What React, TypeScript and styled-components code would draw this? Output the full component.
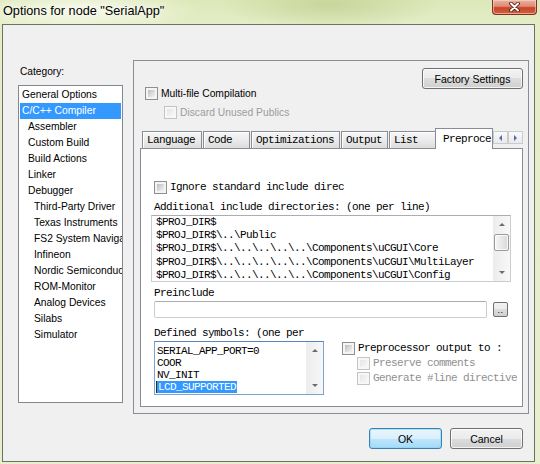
import React from 'react';
import styled, { createGlobalStyle } from 'styled-components';

const UI = `"Liberation Sans", Arial, sans-serif`;
const MONO = `"Liberation Mono", "DejaVu Sans Mono", monospace`;

const GlobalStyle = createGlobalStyle`
  html, body { margin: 0; padding: 0; }
  body { width: 540px; height: 464px; overflow: hidden; background: #e4edc8; }
  * { box-sizing: border-box; }
`;

/* ---------- window frame ---------- */

const Window = styled.div`
  width: 540px;
  height: 464px;
  display: flex;
  flex-direction: column;
  font-family: ${UI};
  background:
    radial-gradient(ellipse 120px 22px at 80px 10px, rgba(250, 252, 240, 0.9), rgba(250, 252, 240, 0) 100%),
    radial-gradient(ellipse 110px 26px at 330px 4px, rgba(196, 210, 150, 0.85), rgba(196, 210, 150, 0) 100%),
    linear-gradient(180deg, #dde8b9 0px, #e4edc6 24px, #e7efcf 100%);
`;

const TitleBar = styled.div`
  height: 24px;
  flex: none;
  display: flex;
  justify-content: space-between;
  align-items: flex-start;
`;

const TitleText = styled.div`
  margin: 3px 0 0 3px;
  font-size: 12.7px;
  line-height: 16px;
  color: #000;
  text-shadow: 0 0 6px rgba(255, 255, 255, 0.95), 0 0 10px rgba(255, 255, 255, 0.8);
`;

const CloseButton = styled.div`
  width: 45px;
  height: 15px;
  margin-right: 3px;
  display: flex;
  align-items: center;
  justify-content: center;
  border: 1px solid #7c3424;
  border-top: none;
  border-radius: 0 0 4px 4px;
  background: linear-gradient(180deg, #eab3a4 0%, #df8a72 45%, #c7452b 55%, #d3603f 100%);
  box-shadow: inset 0 0 0 1px rgba(255, 220, 205, 0.55);
`;

const Client = styled.div`
  flex: 1;
  margin: 0 5px 2px 2px;
  border: 1px solid #6c7261;
  background: #f0f0f0;
  display: flex;
  flex-direction: column;
`;

const MainRow = styled.div`
  display: flex;
  align-items: flex-start;
  margin-top: 35px;
  padding-left: 15px;
`;

/* ---------- category list ---------- */

const LeftColumn = styled.div`
  width: 105px;
  display: flex;
  flex-direction: column;
  padding-top: 5px;
`;

const CategoryLabel = styled.div`
  height: 14px;
  margin: 0 0 6px 2px;
  font-size: 10.2px;
  line-height: 14px;
  color: #000;
`;

const CategoryList = styled.div`
  height: 318px;
  border: 1px solid #828790;
  background: #fff;
  padding-top: 1px;
  overflow: hidden;
`;

const CategoryItem = styled.div<{ $level: number; $selected?: boolean }>`
  height: 16px;
  line-height: 16px;
  font-size: 10.3px;
  white-space: nowrap;
  overflow: hidden;
  padding-left: ${p => (p.$selected ? 2 : [3, 9, 15][p.$level])}px;
  margin: 0 ${p => (p.$selected ? '1px' : '0')};
  color: ${p => (p.$selected ? '#fff' : '#000')};
  background: ${p => (p.$selected ? '#3399ff' : 'transparent')};
`;

/* ---------- options group ---------- */

const OptionsGroup = styled.div`
  margin-left: 10px;
  width: 396px;
  height: 354px;
  border: 1px solid #8a8d93;
  display: flex;
  flex-direction: column;
`;

const FactoryRow = styled.div`
  display: flex;
  justify-content: flex-end;
  padding-right: 5px;
  margin-top: 7px;
`;

const PushButton = styled.div<{ $width: number; $default?: boolean }>`
  width: ${p => p.$width}px;
  height: 21px;
  flex: none;
  display: flex;
  align-items: center;
  justify-content: center;
  font-family: ${UI};
  font-size: 10.5px;
  color: #000;
  border-radius: 3px;
  border: 1px solid ${p => (p.$default ? '#3c7fb1' : '#707070')};
  background: ${p =>
    p.$default
      ? 'linear-gradient(180deg, #eaf6fd 0%, #d9f0fc 50%, #bee6fd 50%, #a7d9f5 100%)'
      : 'linear-gradient(180deg, #f2f2f2 0%, #ebebeb 50%, #dddddd 50%, #cfcfcf 100%)'};
  box-shadow: inset 0 0 0 1px ${p => (p.$default ? 'rgba(120, 220, 250, 0.6)' : 'rgba(255, 255, 255, 0.75)')};
`;

const CheckRow = styled.div<{ $indent: number; $top: number; $clip?: number }>`
  display: flex;
  align-items: center;
  height: 13px;
  margin-top: ${p => p.$top}px;
  margin-left: ${p => p.$indent}px;
  ${p => (p.$clip ? `width: ${p.$clip}px; overflow: hidden;` : '')}
`;

const CheckBox = styled.span<{ $disabled?: boolean }>`
  position: relative;
  width: 13px;
  height: 13px;
  flex: none;
  margin-right: 3px;
  border: 1px solid ${p => (p.$disabled ? '#c4c4c4' : '#8e8f8f')};
  background: ${p => (p.$disabled ? '#f7f7f7' : '#f4f4f4')};
  &::after {
    content: '';
    position: absolute;
    inset: 2px;
    background: ${p =>
      p.$disabled
        ? 'linear-gradient(135deg, #e6e6e6, #f7f7f7)'
        : 'linear-gradient(135deg, #b9bdc3, #e4e5e7 70%, #f0f0f1)'};
  }
`;

const UiLabel = styled.span<{ $muted?: boolean }>`
  font-size: 10.3px;
  line-height: 13px;
  white-space: nowrap;
  color: ${p => (p.$muted ? '#9c9c9c' : '#000')};
`;

const MonoText = styled.span<{ $muted?: boolean }>`
  font-family: ${MONO};
  font-size: 11px;
  letter-spacing: -0.6px;
  line-height: 13px;
  white-space: nowrap;
  color: ${p => (p.$muted ? '#8f8f8f' : '#000')};
`;

/* ---------- tabs ---------- */

const TabStrip = styled.div`
  position: relative;
  z-index: 1;
  display: flex;
  align-items: flex-end;
  height: 21px;
  margin: 9px 0 -1px 6px;
  width: 383px;
  padding-left: 2px;
`;

const Tab = styled.div<{ $width: number; $active?: boolean }>`
  width: ${p => p.$width}px;
  flex: none;
  height: ${p => (p.$active ? 21 : 18)}px;
  margin-right: ${p => (p.$active ? 0 : 1)}px;
  margin-left: ${p => (p.$active ? -2 : 0)}px;
  padding: ${p => (p.$active ? '2px 0 0 7px' : '0 0 0 4px')};
  border: 1px solid #898c95;
  border-bottom: ${p => (p.$active ? 'none' : '1px solid #898c95')};
  background: ${p =>
    p.$active ? '#fff' : 'linear-gradient(180deg, #f6f6f6 0%, #ebebeb 50%, #dcdcdc 100%)'};
  box-shadow: ${p => (p.$active ? 'none' : 'inset 1px 1px 0 #fff')};
  font-family: ${MONO};
  font-size: 11px;
  letter-spacing: -0.6px;
  line-height: 16px;
  white-space: nowrap;
  overflow: hidden;
  color: #000;
`;

const TabScroller = styled.div`
  align-self: flex-start;
  margin-top: 3px;
  display: flex;
`;

const ScrollerButton = styled.div`
  width: 15px;
  height: 13px;
  display: flex;
  align-items: center;
  justify-content: center;
  border: 1px solid #c9cbd0;
  background: linear-gradient(180deg, #fafafa, #e9e9e9);
`;

const ArrowGlyph = styled.span<{ $dir: 'left' | 'right' | 'up' | 'down'; $color: string; $size: number }>`
  width: 0;
  height: 0;
  border-style: solid;
  border-color: transparent;
  ${p => {
    const s = p.$size;
    switch (p.$dir) {
      case 'left':
        return `border-width: ${s}px ${s}px ${s}px 0; border-right-color: ${p.$color};`;
      case 'right':
        return `border-width: ${s}px 0 ${s}px ${s}px; border-left-color: ${p.$color};`;
      case 'up':
        return `border-width: 0 ${s}px ${s}px ${s}px; border-bottom-color: ${p.$color};`;
      default:
        return `border-width: ${s}px ${s}px 0 ${s}px; border-top-color: ${p.$color};`;
    }
  }}
`;

const TabPanel = styled.div`
  margin-left: 6px;
  width: 383px;
  height: 259px;
  border: 1px solid #898c95;
  background: #fff;
  display: flex;
  flex-direction: column;
`;

const FieldLabel = styled.div<{ $top: number }>`
  margin: ${p => p.$top}px 0 0 13px;
  height: 13px;
  display: flex;
  align-items: center;
`;

/* ---------- edit boxes ---------- */

const EditBox = styled.div<{ $width: number; $height: number; $focused?: boolean }>`
  width: ${p => p.$width}px;
  height: ${p => p.$height}px;
  flex: none;
  display: flex;
  background: #fff;
  border: 1px solid ${p => (p.$focused ? '#7da2ce' : '#c9ccd2')};
  border-top-color: ${p => (p.$focused ? '#5a86c0' : '#abadb3')};
`;

const Lines = styled.div<{ $pad: string; $lineHeight: number }>`
  flex: 1;
  overflow: hidden;
  padding: ${p => p.$pad};
  display: flex;
  flex-direction: column;
  & > * {
    height: ${p => p.$lineHeight}px;
    line-height: ${p => p.$lineHeight}px;
  }
`;

const SelectedLine = styled.span`
  align-self: flex-start;
  background: #3399ff;
  color: #fff;
  padding: 0 1px;
  border-left: 1px solid #3b2a10;
  margin-left: -1px;
`;

const Scrollbar = styled.div`
  width: 17px;
  flex: none;
  display: flex;
  flex-direction: column;
  background: linear-gradient(90deg, #ececec, #f8f8f8);
`;

const ScrollArrow = styled.div`
  height: 17px;
  flex: none;
  display: flex;
  align-items: center;
  justify-content: center;
`;

const ScrollThumb = styled.div`
  height: 17px;
  flex: none;
  margin: 1px 0 0 1px;
  width: 15px;
  border: 1px solid #9a9a9a;
  border-radius: 2px;
  background: linear-gradient(90deg, #f6f6f6, #e6e6e6 55%, #d9d9d9);
  box-shadow: inset 0 0 0 1px rgba(255, 255, 255, 0.8);
`;

const ScrollTrack = styled.div`
  flex: 1;
`;

const InputRow = styled.div<{ $indent?: number }>`
  display: flex;
  align-items: center;
  margin: 1px 0 0 ${p => p.$indent ?? 13}px;
`;

const BrowseButton = styled.div`
  width: 15px;
  height: 15px;
  margin-left: 6px;
  display: flex;
  align-items: flex-end;
  justify-content: center;
  padding-bottom: 2px;
  border: 1px solid #707070;
  border-radius: 2px;
  background: linear-gradient(180deg, #f2f2f2 0%, #ebebeb 50%, #dddddd 50%, #cfcfcf 100%);
  font-family: ${UI};
  font-size: 9px;
  line-height: 8px;
  letter-spacing: 0.5px;
  color: #000;
`;

const BottomRow = styled.div`
  display: flex;
  align-items: flex-start;
  margin: 1px 0 0 13px;
`;

const OutputColumn = styled.div`
  margin-left: 18px;
  display: flex;
  flex-direction: column;
`;

const DialogButtons = styled.div`
  display: flex;
  justify-content: flex-end;
  gap: 8px;
  margin-top: 14px;
  padding-right: 11px;
`;

/* ---------- data ---------- */

const categories: { label: string; level: number; selected?: boolean }[] = [
  { label: 'General Options', level: 0 },
  { label: 'C/C++ Compiler', level: 1, selected: true },
  { label: 'Assembler', level: 1 },
  { label: 'Custom Build', level: 1 },
  { label: 'Build Actions', level: 1 },
  { label: 'Linker', level: 1 },
  { label: 'Debugger', level: 1 },
  { label: 'Third-Party Driver', level: 2 },
  { label: 'Texas Instruments', level: 2 },
  { label: 'FS2 System Navigator', level: 2 },
  { label: 'Infineon', level: 2 },
  { label: 'Nordic Semiconductor', level: 2 },
  { label: 'ROM-Monitor', level: 2 },
  { label: 'Analog Devices', level: 2 },
  { label: 'Silabs', level: 2 },
  { label: 'Simulator', level: 2 },
];

const tabs = [
  { label: 'Language', width: 60 },
  { label: 'Code', width: 47 },
  { label: 'Optimizations', width: 89 },
  { label: 'Output', width: 47 },
  { label: 'List', width: 47 },
];

const includeDirs = [
  '$PROJ_DIR$',
  '$PROJ_DIR$\\..\\Public',
  '$PROJ_DIR$\\..\\..\\..\\..\\..\\Components\\uCGUI\\Core',
  '$PROJ_DIR$\\..\\..\\..\\..\\..\\Components\\uCGUI\\MultiLayer',
  '$PROJ_DIR$\\..\\..\\..\\..\\..\\Components\\uCGUI\\Config',
];

const symbols = ['SERIAL_APP_PORT=0', 'COOR', 'NV_INIT'];

function CloseGlyph() {
  return (
    <svg width="13" height="10" viewBox="0 0 13 10">
      <path d="M3 1.5 L10 8.5 M10 1.5 L3 8.5" stroke="#5a1d12" strokeWidth="3.8" strokeLinecap="round" />
      <path d="M3 1.5 L10 8.5 M10 1.5 L3 8.5" stroke="#ffffff" strokeWidth="2" strokeLinecap="round" />
    </svg>
  );
}

function VScroll({ thumb }: { thumb?: boolean }) {
  return (
    <Scrollbar>
      <ScrollArrow>
        <ArrowGlyph $dir="up" $color="#6b6b6b" $size={3} />
      </ScrollArrow>
      {thumb && <ScrollThumb />}
      <ScrollTrack />
      <ScrollArrow>
        <ArrowGlyph $dir="down" $color="#6b6b6b" $size={3} />
      </ScrollArrow>
    </Scrollbar>
  );
}

export default function App() {
  return (
    <>
      <GlobalStyle />
      <Window>
        <TitleBar>
          <TitleText>Options for node "SerialApp"</TitleText>
          <CloseButton>
            <CloseGlyph />
          </CloseButton>
        </TitleBar>
        <Client>
          <MainRow>
            <LeftColumn>
              <CategoryLabel>Category:</CategoryLabel>
              <CategoryList>
                {categories.map(c => (
                  <CategoryItem key={c.label} $level={c.level} $selected={c.selected}>
                    {c.label}
                  </CategoryItem>
                ))}
              </CategoryList>
            </LeftColumn>

            <OptionsGroup>
              <FactoryRow>
                <PushButton $width={101}>Factory Settings</PushButton>
              </FactoryRow>
              <CheckRow $indent={11} $top={-2}>
                <CheckBox />
                <UiLabel>Multi-file Compilation</UiLabel>
              </CheckRow>
              <CheckRow $indent={30} $top={6}>
                <CheckBox $disabled />
                <UiLabel $muted>Discard Unused Publics</UiLabel>
              </CheckRow>

              <TabStrip>
                {tabs.map(t => (
                  <Tab key={t.label} $width={t.width}>
                    {t.label}
                  </Tab>
                ))}
                <Tab $width={58} $active>
                  Preproce
                </Tab>
                <TabScroller>
                  <ScrollerButton>
                    <ArrowGlyph $dir="left" $color="#4d6cb5" $size={3} />
                  </ScrollerButton>
                  <ScrollerButton>
                    <ArrowGlyph $dir="right" $color="#4d6cb5" $size={3} />
                  </ScrollerButton>
                </TabScroller>
              </TabStrip>

              <TabPanel>
                <CheckRow $indent={13} $top={32}>
                  <CheckBox />
                  <MonoText>Ignore standard include direc</MonoText>
                </CheckRow>
                <FieldLabel $top={7}>
                  <MonoText>Additional include directories: (one per line)</MonoText>
                </FieldLabel>
                <InputRow $indent={10}>
                  <EditBox $width={360} $height={67}>
                    <Lines $pad="0 0 0 4px" $lineHeight={13.2}>
                      {includeDirs.map(d => (
                        <MonoText key={d}>{d}</MonoText>
                      ))}
                    </Lines>
                    <VScroll thumb />
                  </EditBox>
                </InputRow>

                <FieldLabel $top={5}>
                  <MonoText>Preinclude</MonoText>
                </FieldLabel>
                <InputRow>
                  <EditBox $width={333} $height={17} style={{ borderRadius: 2 }} />
                  <BrowseButton>..</BrowseButton>
                </InputRow>

                <FieldLabel $top={9}>
                  <MonoText>Defined symbols: (one per</MonoText>
                </FieldLabel>
                <BottomRow>
                  <EditBox $width={170} $height={54} $focused>
                    <Lines $pad="3px 0 0 2px" $lineHeight={12}>
                      {symbols.map(s => (
                        <MonoText key={s}>{s}</MonoText>
                      ))}
                      <MonoText>
                        <SelectedLine>LCD_SUPPORTED</SelectedLine>
                      </MonoText>
                    </Lines>
                    <VScroll />
                  </EditBox>
                  <OutputColumn>
                    <CheckRow $indent={0} $top={1}>
                      <CheckBox />
                      <MonoText>Preprocessor output to :</MonoText>
                    </CheckRow>
                    <CheckRow $indent={15} $top={2}>
                      <CheckBox $disabled />
                      <MonoText $muted>Preserve comments</MonoText>
                    </CheckRow>
                    <CheckRow $indent={15} $top={2}>
                      <CheckBox $disabled />
                      <MonoText $muted>Generate #line directive</MonoText>
                    </CheckRow>
                  </OutputColumn>
                </BottomRow>
              </TabPanel>
            </OptionsGroup>
          </MainRow>

          <DialogButtons>
            <PushButton $width={73} $default>
              OK
            </PushButton>
            <PushButton $width={73}>Cancel</PushButton>
          </DialogButtons>
        </Client>
      </Window>
    </>
  );
}
